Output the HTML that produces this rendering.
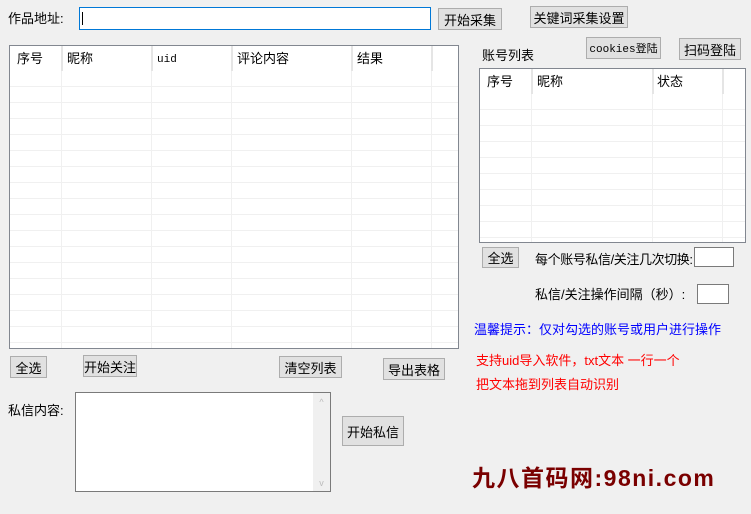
<!DOCTYPE html>
<html><head><meta charset="utf-8"><style>
body{margin:0;width:751px;height:514px;background:#f0f0f0;position:relative;overflow:hidden;font-family:"Liberation Sans","Noto Sans CJK SC",sans-serif;font-size:13px;color:#000}
.a{position:absolute;white-space:nowrap}
.btn{position:absolute;background:#e1e1e1;border:1px solid #adadad;box-sizing:border-box;text-align:center;font-size:13px;display:flex;align-items:center;justify-content:center}
.inp{position:absolute;background:#fff;border:1px solid #7a7a7a;box-sizing:border-box}
.tbl{position:absolute;background:#fff;border:1px solid #828790;box-sizing:border-box;overflow:hidden}
.rows{position:absolute;left:0;right:0;top:25px;bottom:0;background:repeating-linear-gradient(to bottom,#fff 0,#fff 15px,#f0f0f0 15px,#f0f0f0 16px)}
.col{position:absolute;top:0;bottom:0;width:1px;background:#f0f0f0}
.hcol{position:absolute;top:0;height:25px;width:2px;background:#e5e5e5}
.h{position:absolute;top:5px;line-height:16px}
</style></head><body>
<div class="a" style="left:8px;top:8px">作品地址:</div>
<div class="inp" style="left:79px;top:7px;width:352px;height:23px;border:1px solid #0078d7"><div style="position:absolute;left:2px;top:4px;width:1px;height:13px;background:#000"></div></div>
<div class="btn" style="left:438px;top:8px;width:64px;height:22px">开始采集</div>
<div class="btn" style="left:530px;top:6px;width:98px;height:22px">关键词采集设置</div>
<div class="btn" style="left:586px;top:37px;width:75px;height:22px;font-family:'Liberation Mono','Noto Sans CJK SC',monospace;font-size:11px">cookies登陆</div>
<div class="btn" style="left:679px;top:38px;width:62px;height:22px">扫码登陆</div>
<div class="a" style="left:482px;top:45px">账号列表</div>

<div class="tbl" style="left:9px;top:45px;width:450px;height:304px">
<div class="rows"></div>
<div class="col" style="left:51px"></div><div class="col" style="left:141px"></div><div class="col" style="left:221px"></div><div class="col" style="left:341px"></div><div class="col" style="left:421px"></div>
<div style="position:absolute;left:0;right:0;top:0;height:25px;background:#fff"></div>
<div class="hcol" style="left:51px"></div><div class="hcol" style="left:141px"></div><div class="hcol" style="left:221px"></div><div class="hcol" style="left:341px"></div><div class="hcol" style="left:421px"></div>
<div class="h" style="left:7px">序号</div><div class="h" style="left:57px">昵称</div><div class="h" style="left:147px;font-family:'Liberation Mono',monospace;font-size:11px;top:6px">uid</div><div class="h" style="left:227px">评论内容</div><div class="h" style="left:347px">结果</div>
</div>

<div class="tbl" style="left:479px;top:68px;width:267px;height:175px">
<div class="rows"></div>
<div class="col" style="left:51px"></div><div class="col" style="left:172px"></div><div class="col" style="left:242px"></div>
<div style="position:absolute;left:0;right:0;top:0;height:25px;background:#fff"></div>
<div class="hcol" style="left:51px"></div><div class="hcol" style="left:172px"></div><div class="hcol" style="left:242px"></div>
<div class="h" style="left:7px">序号</div><div class="h" style="left:57px">昵称</div><div class="h" style="left:177px">状态</div>
</div>

<div class="btn" style="left:482px;top:247px;width:37px;height:21px">全选</div>
<div class="a" style="left:535px;top:249px;letter-spacing:-0.4px">每个账号私信/关注几次切换:</div>
<div class="inp" style="left:694px;top:247px;width:40px;height:20px"></div>
<div class="a" style="left:535px;top:284px">私信/关注操作间隔（秒）:</div>
<div class="inp" style="left:697px;top:284px;width:32px;height:20px"></div>
<div class="a" style="left:474px;top:319px;color:#0000ff">温馨提示：仅对勾选的账号或用户进行操作</div>
<div class="a" style="left:476px;top:350px;color:#ff0000">支持uid导入软件，txt文本 一行一个</div>
<div class="a" style="left:476px;top:374px;color:#ff0000">把文本拖到列表自动识别</div>

<div class="btn" style="left:10px;top:356px;width:37px;height:22px">全选</div>
<div class="btn" style="left:83px;top:355px;width:54px;height:22px">开始关注</div>
<div class="btn" style="left:279px;top:356px;width:63px;height:22px">清空列表</div>
<div class="btn" style="left:383px;top:358px;width:62px;height:22px">导出表格</div>
<div class="a" style="left:8px;top:400px">私信内容:</div>
<div class="inp" style="left:75px;top:392px;width:256px;height:100px"><div style="position:absolute;right:0;top:0;width:17px;bottom:0;background:#f0f0f0;color:#bbb;font-size:9px;text-align:center">
<div style="margin-top:4px">^</div><div style="position:absolute;bottom:3px;width:17px">v</div></div></div>
<div class="btn" style="left:342px;top:416px;width:62px;height:30px">开始私信</div>

<div class="a" style="left:472px;top:459px;color:#7a0000;font-size:23px;font-weight:bold;letter-spacing:1.5px;font-family:'Liberation Sans','Noto Sans CJK SC',sans-serif">九八首码网:98ni.com</div>
</body></html>
